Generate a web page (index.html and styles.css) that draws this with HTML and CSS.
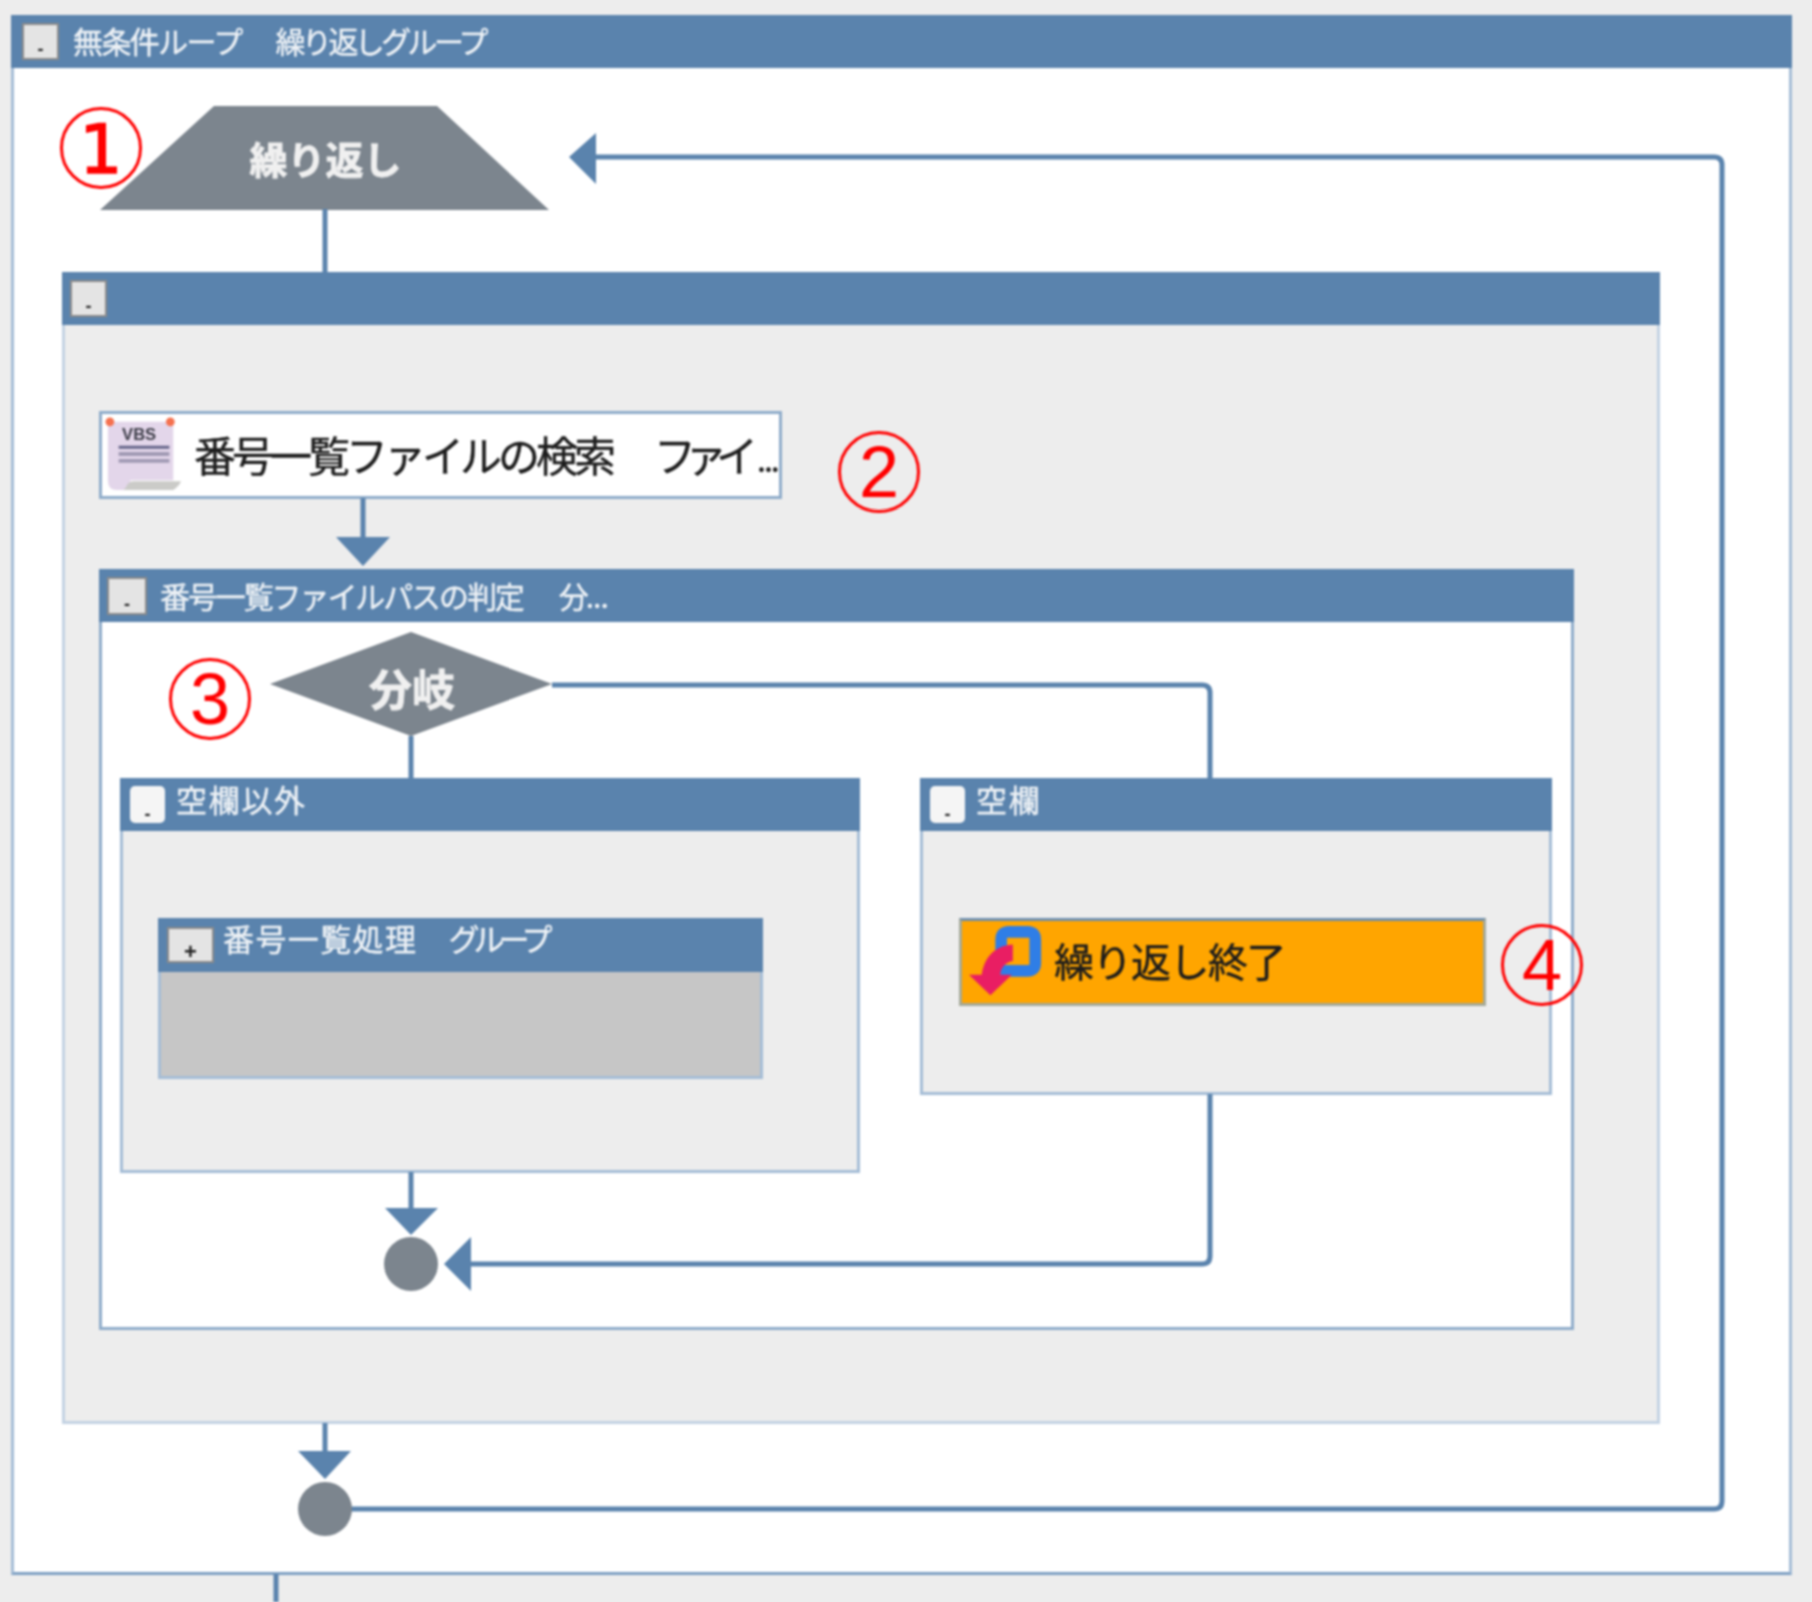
FILE: index.html
```html
<!DOCTYPE html>
<html lang="ja">
<head>
<meta charset="utf-8">
<title>無条件ループ 繰り返しグループ</title>
<link rel="stylesheet" href="styles.css">
</head>
<body>
<main class="canvas">
  <section class="group g-outer">
    <header class="group-head"><span class="toggle toggle-big">-</span><span class="title t-outer"><span class="w1">無条件ループ</span><span class="w2">繰り返しグループ</span></span></header>
    <div class="group-body body-white"></div>
  </section>

  <div class="start-shape"><span class="shape-label">繰り返し</span></div>

  <section class="group g-loop">
    <header class="group-head"><span class="toggle toggle-big">-</span></header>
    <div class="group-body body-grey"></div>
  </section>

  <div class="action a-search">
    <svg class="icon-vbs" viewBox="0 0 80 80" aria-hidden="true">
      <path class="paper" d="M3 6H70V66H26L26 76H12Q3 76 3 66Z"/>
      <path class="curl" d="M22 72Q24 67 30 67H78Q76 72 70 76H18Q21 75 22 72Z"/>
      <circle class="pin" cx="5" cy="6" r="4.5"/><circle class="pin" cx="67" cy="6" r="4.5"/>
      <text class="vbs-text" x="35" y="25" text-anchor="middle">VBS</text>
      <path class="rule-dark" d="M14 32H66"/>
      <path class="rule" d="M14 39H66M14 46H66"/>
    </svg>
    <span class="action-text t-search"><span class="s1">番号一覧ファイルの検索</span><span class="s2">ファイ</span><span class="dots">...</span></span>
  </div>

  <section class="group g-branch">
    <header class="group-head"><span class="toggle toggle-wider">-</span><span class="title t-branch"><span class="b1">番号一覧ファイルパスの判定</span><span class="b2">分</span><span class="b3">...</span></span></header>
    <div class="group-body body-white"></div>
  </section>

  <div class="diamond-shape"><span class="shape-label diamond-label">分岐</span></div>

  <section class="group g-case-a">
    <header class="group-head"><span class="toggle toggle-soft">-</span><span class="title t-case">空欄以外</span></header>
    <div class="group-body body-grey"></div>
  </section>

  <section class="group g-collapsed">
    <header class="group-head"><span class="toggle toggle-wide">+</span><span class="title t-collapsed"><span class="c1">番号一覧処理</span><span class="c2">グループ</span></span></header>
    <div class="group-body body-dark"></div>
  </section>

  <section class="group g-case-b">
    <header class="group-head"><span class="toggle toggle-soft">-</span><span class="title t-case">空欄</span></header>
    <div class="group-body body-grey"></div>
  </section>

  <div class="action a-end">
    <svg class="icon-loop" viewBox="0 0 80 80" aria-hidden="true">
      <path class="loop-ring" d="M34 30V17Q34 9 42 9H61Q69 9 69 17V41Q69 49 61 49H33"/>
      <path class="loop-arrow" d="M46 22C33 23 18 29 14 53H1L23 74L45 53H33C34 45 39 40 46 39Z"/>
    </svg>
    <span class="action-text t-end">繰り返し終了</span>
  </div>

  <svg class="connectors" viewBox="0 0 1812 1602" aria-hidden="true">
    <path class="wire" d="M325 209V273"/>
    <path class="wire" d="M596 157H1714Q1722 157 1722 165V1501Q1722 1509 1714 1509H350"/>
    <path class="wire" d="M363 498V540"/>
    <path class="fill" d="M336 537H390L363 566Z"/>
    <path class="wire" d="M552 685H1202Q1210 685 1210 693V778"/>
    <path class="wire" d="M411 736V778"/>
    <path class="wire" d="M411 1172V1212"/>
    <path class="fill" d="M385 1208H438L411 1235Z"/>
    <path class="wire" d="M1210 1094V1256Q1210 1264 1202 1264H470"/>
    <path class="fill" d="M471 1237V1291L444 1264Z"/>
    <path class="wire" d="M325 1423V1455"/>
    <path class="fill" d="M298 1451H351L325 1479Z"/>
    <path class="fill" d="M596 133V184L569 157Z"/>
    <path class="wire" d="M276 1574V1602"/>
    <circle class="node" cx="411" cy="1264" r="27"/>
    <circle class="node" cx="325" cy="1509" r="27"/>
  </svg>

  <span class="mark m1 digit-serif">1</span>
  <span class="mark m2">2</span>
  <span class="mark m3">3</span>
  <span class="mark m4">4</span>
</main>
</body>
</html>
```
FILE: styles.css
```css
html, body { margin: 0; padding: 0; background: #ededed; }

.canvas {
  position: relative;
  width: 1812px;
  height: 1602px;
  overflow: hidden;
  background: #ededed;
  font-family: "Noto Sans CJK JP", "Noto Sans", sans-serif;
  filter: blur(0.8px);
}

.group {
  position: absolute;
  display: flex;
  flex-direction: column;
  box-sizing: border-box;
  border: 3px solid #a5bdd6;
  border-top: 0;
}
.group-head {
  display: flex;
  align-items: center;
  flex: none;
  margin: 0 -3px;
  background: #5a83ad;
}
.group-body { flex: 1; }
.body-white { background: #fff; }
.body-grey { background: #ededed; }
.body-dark { background: #c6c6c6; }

.g-outer { left: 11px; top: 15px; width: 1781px; height: 1560px; border-bottom-color: #7ea0c3; }
.g-outer .group-head { height: 53px; padding-left: 11px; }
.g-loop { left: 62px; top: 272px; width: 1598px; height: 1152px; border-color: #c3d2e3; }
.g-loop .group-head { height: 53px; padding-left: 8px; }
.g-branch { left: 99px; top: 569px; width: 1475px; height: 761px; border-color: #8facca; }
.g-branch .group-head { height: 53px; padding-left: 8px; }
.g-case-a { left: 120px; top: 778px; width: 740px; height: 395px; border-color: #a5bdd6; }
.g-case-b { left: 920px; top: 778px; width: 632px; height: 317px; border-color: #a5bdd6; }
.g-case-a .group-head, .g-case-b .group-head { height: 53px; padding-left: 10px; }
.g-collapsed { left: 158px; top: 918px; width: 605px; height: 161px; border-color: #a5bdd6; }
.g-collapsed .group-head { height: 54px; padding-left: 9px; }

.toggle {
  flex: none;
  display: flex;
  align-items: flex-end;
  justify-content: center;
  box-sizing: border-box;
  color: #222;
  font: 700 18px/18px "Liberation Sans", sans-serif;
}
.toggle-big { width: 37px; height: 37px; background: #e4e4e4; border: 2px solid #8a8a8a; }
.toggle-wider { width: 40px; height: 38px; background: #e4e4e4; border: 2px solid #8a8a8a; }
.toggle-soft { width: 35px; height: 37px; background: #f5f5f5; border-radius: 5px; }
.toggle-wide { width: 47px; height: 36px; background: #e4e4e4; border: 2px solid #8a8a8a; font-size: 22px; }

.title { display: flex; color: #eef2f6; white-space: nowrap; line-height: 1; -webkit-text-stroke: 0.4px #eef2f6; }
.t-outer { margin: -4px 0 0 14px; font-size: 30px; }
.t-outer .w1 { letter-spacing: -1.6px; }
.t-outer .w2 { margin-left: 34px; letter-spacing: -3.6px; }
.t-branch { margin: -1px 0 0 13px; font-size: 30px; }
.t-branch .b1 { letter-spacing: -2.1px; }
.t-branch .b2 { margin-left: 36px; }
.t-branch .b3 { letter-spacing: -1px; margin-left: -3px; }
.t-case { margin: -13px 0 0 11px; font-size: 31px; letter-spacing: 1.7px; }
.t-collapsed { margin: -16px 0 0 9px; font-size: 31px; }
.t-collapsed .c1 { letter-spacing: 1.4px; }
.t-collapsed .c2 { margin-left: 31px; letter-spacing: -6px; }

.start-shape, .diamond-shape {
  position: absolute;
  display: flex;
  align-items: center;
  justify-content: center;
  background: #7c858e;
}
.start-shape {
  left: 100px; top: 106px; width: 449px; height: 104px;
  clip-path: polygon(114px 0, 337px 0, 100% 100%, 0 100%);
}
.diamond-shape {
  left: 270px; top: 632px; width: 282px; height: 104px;
  clip-path: polygon(50% 0, 100% 50%, 50% 100%, 0 50%);
}
.shape-label { color: #f0f0f0; font-size: 38px; font-weight: 700; line-height: 1; white-space: nowrap; -webkit-text-stroke: 0.8px #f0f0f0; padding-left: 2px; }
.diamond-label { font-size: 43px; margin-top: 7px; }

.action {
  position: absolute;
  display: flex;
  align-items: center;
  box-sizing: border-box;
  border: 3px solid #8facca;
}
.a-search { left: 99px; top: 411px; width: 683px; height: 88px; background: #fff; padding-left: 3px; }
.a-end { left: 959px; top: 918px; width: 527px; height: 88px; background: #ffa500; border-top-color: #6f8fae; border-bottom-color: #a5a998; border-left-color: #a5a998; border-right-color: #a5a998; padding-left: 6px; }
.action-text { display: flex; align-items: baseline; white-space: nowrap; color: #1c1c1c; line-height: 1; -webkit-text-stroke: 0.4px #1c1c1c; }
.t-search { margin: -2px 0 0 11px; font-size: 42px; }
.t-search .s1 { letter-spacing: -4px; }
.t-search .s2 { margin-left: 42px; letter-spacing: -11px; }
.t-search .dots { margin-left: 10px; font-size: 32px; letter-spacing: -2px; }
.t-end { margin: -4px 0 0 8px; font-size: 40px; letter-spacing: -1.5px; }

.icon-vbs { flex: none; width: 78px; height: 78px; }
.paper { fill: #e3d6ea; }
.curl { fill: #cbcbc8; }
.pin { fill: #f5714f; }
.vbs-text { font: 700 17px "Liberation Sans", sans-serif; fill: #3d3d48; }
.rule-dark { stroke: #66668a; stroke-width: 3; fill: none; }
.rule { stroke: #a19ab4; stroke-width: 4; fill: none; }

.icon-loop { flex: none; width: 78px; height: 78px; }
.loop-ring { fill: none; stroke: #2f7ee6; stroke-width: 12; }
.loop-arrow { fill: #e91e63; }

.connectors { position: absolute; left: 0; top: 0; width: 1812px; height: 1602px; pointer-events: none; }
.wire { fill: none; stroke: #5a83ad; stroke-width: 5; }
.fill { fill: #5a83ad; }
.node { fill: #7c858e; }

.mark {
  position: absolute;
  display: flex;
  align-items: center;
  justify-content: center;
  box-sizing: border-box;
  width: 82px;
  height: 82px;
  border: 3px solid #f00;
  border-radius: 50%;
  color: #f00;
  font: 400 72px/1 "Liberation Sans", sans-serif;
}
.digit-serif { font-family: "DejaVu Sans", sans-serif; font-size: 68px; -webkit-text-stroke: 1.5px #f00; padding-top: 4px; }
.m1 { left: 60px; top: 107px; }
.m2 { left: 838px; top: 431px; }
.m3 { left: 169px; top: 658px; }
.m4 { left: 1501px; top: 924px; }
```
